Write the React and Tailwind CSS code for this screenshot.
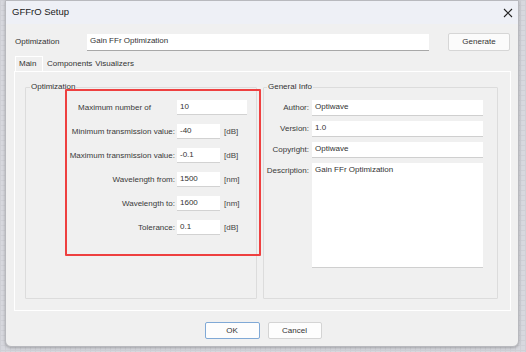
import React from "react";

const font = { fontFamily: '"Liberation Sans", Arial, sans-serif' };

function Field({ label, value, unit, wide }) {
  return (
    <div className="flex items-center h-[15px]">
      <div className={`w-[151px] text-right ${wide ? "pr-[26px]" : "pr-[2px]"} text-[8px] text-[#3a3a3a] leading-none`}>{label}</div>
      <div
        className={`${wide ? "w-[70px]" : "w-[43px]"} h-[15px] bg-white border-b border-[#d2d2d2] text-[8px] text-[#333] leading-none pl-[3px] pt-[3px]`}
      >
        {value}
      </div>
      {unit && <div className="ml-[4px] text-[8px] text-[#444] leading-none">{unit}</div>}
    </div>
  );
}

function InfoField({ label, value, tall }) {
  return (
    <div className="flex items-start">
      <div className="w-[48px] text-right pr-[3px] pt-[4px] text-[8px] text-[#3a3a3a] leading-none">{label}</div>
      <div
        className={`w-[171px] ${tall ? "h-[105px]" : "h-[16px]"} bg-white border-b border-[#cfcfcf] text-[8px] text-[#333] leading-none pl-[3px] pt-[3px]`}
      >
        {value}
      </div>
    </div>
  );
}

export default function App() {
  return (
    <div
      className="w-[526px] h-[352px] overflow-hidden bg-[#d7d8de] bg-[linear-gradient(#cfd0d6_1px,transparent_1px),linear-gradient(90deg,#cfd0d6_1px,transparent_1px)] bg-[size:5px_5px]"
      style={font}
    >
      <div className="ml-[5px] w-[514px] h-[347px] bg-[#f0f0f0] rounded-b-[6px] border border-[#b8b9be] shadow-[0_1px_3px_rgba(0,0,0,0.25)] flex flex-col">
        {/* title bar */}
        <div className="h-[23px] bg-[#eef0f6] flex items-center justify-between pl-[6px] pr-[5px] shrink-0">
          <span className="text-[9.5px] text-[#1a1a1a]">GFFrO Setup</span>
          <svg width="10" height="10" viewBox="0 0 10 10">
            <path d="M1 1 L9 9 M9 1 L1 9" stroke="#222" strokeWidth="1.1" />
          </svg>
        </div>

        {/* optimization row */}
        <div className="flex items-center pl-[9px] mt-[9px]">
          <div className="w-[72px] text-[8px] text-[#333]">Optimization</div>
          <div className="w-[342px] h-[17px] bg-white border-b border-[#a8a8a8] text-[8px] text-[#333] pl-[3px] pt-[3px] leading-none">
            Gain FFr Optimization
          </div>
          <div className="ml-[19px] w-[62px] h-[18px] bg-[#fbfbfb] border border-[#d6d6d6] rounded-[2px] flex items-center justify-center text-[8px] text-[#333]">
            Generate
          </div>
        </div>

        {/* tabs */}
        <div className="flex items-end pl-[9px] mt-[5px] h-[15px] text-[8px] text-[#333]">
          <div className="h-[15px] w-[28px] border border-b-0 border-[#ffffff] bg-[#f0f0f0] pl-[3px] pt-[3px] leading-none">Main</div>
          <div className="pl-[4px] pb-[3px] leading-none">Components</div>
          <div className="pl-[3px] pb-[3px] leading-none">Visualizers</div>
        </div>

        {/* panel */}
        <div className="relative ml-[8px] w-[497px] h-[240px] border border-[#ffffff] pt-[10px] pl-[10px] flex gap-[6px]">
          <fieldset className="w-[232px] h-[217px] border border-[#dcdcdc] rounded-[1px]">
            <legend className="ml-[4px] px-[1px] text-[8px] leading-[10px] text-[#333]">Optimization</legend>
            <div className="pt-[8px] flex flex-col gap-[9px]">
              <Field label="Maximum number of" value="10" wide />
              <Field label="Minimum transmission value:" value="-40" unit="[dB]" />
              <Field label="Maximum transmission value:" value="-0.1" unit="[dB]" />
              <Field label="Wavelength from:" value="1500" unit="[nm]" />
              <Field label="Wavelength to:" value="1600" unit="[nm]" />
              <Field label="Tolerance:" value="0.1" unit="[dB]" />
            </div>
          </fieldset>
          <fieldset className="w-[235px] h-[217px] border border-[#dcdcdc] rounded-[1px]">
            <legend className="ml-[3px] px-[1px] text-[8px] leading-[10px] text-[#333]">General Info</legend>
            <div className="pt-[8px] flex flex-col gap-[5px]">
              <InfoField label="Author:" value="Optiwave" />
              <InfoField label="Version:" value="1.0" />
              <InfoField label="Copyright:" value="Optiwave" />
              <InfoField label="Description:" value="Gain FFr Optimization" tall />
            </div>
          </fieldset>
          <div className="absolute left-[50px] top-[17px] w-[196px] h-[167px] border-2 border-[#ee4040] rounded-[1px] pointer-events-none" />
        </div>

        {/* buttons */}
        <div className="flex justify-center gap-[8px] mt-[11px] pl-[2px]">
          <div className="w-[55px] h-[17px] bg-[#fdfdfd] border border-[#80a9d6] rounded-[2px] flex items-center justify-center text-[8px] text-[#333]">OK</div>
          <div className="w-[54px] h-[17px] bg-[#fdfdfd] border border-[#d4d4d4] rounded-[2px] flex items-center justify-center text-[8px] text-[#333]">Cancel</div>
        </div>
      </div>
    </div>
  );
}
